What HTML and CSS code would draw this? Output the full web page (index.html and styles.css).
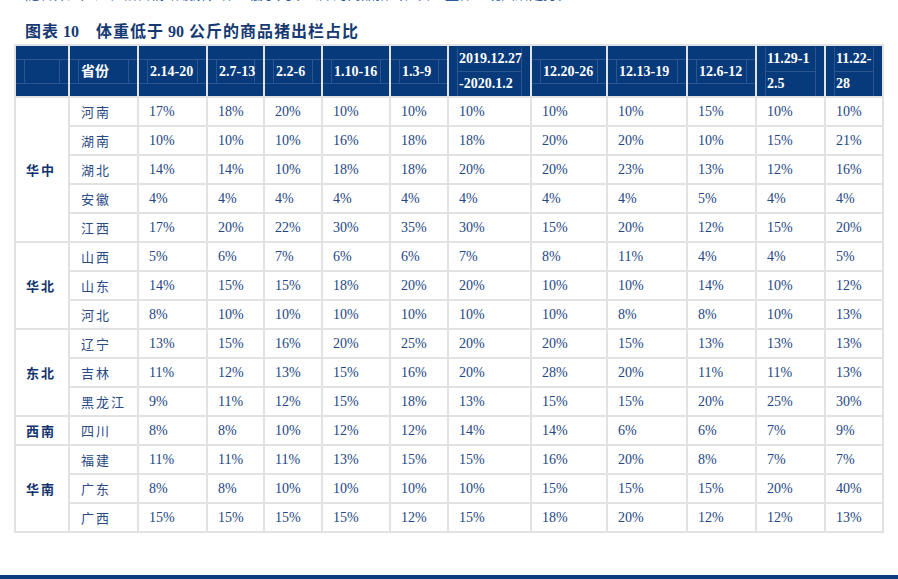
FILE: index.html
```html
<!DOCTYPE html>
<html lang="zh">
<head>
<meta charset="utf-8">
<title>体重低于90公斤的商品猪出栏占比</title>
<link rel="stylesheet" href="styles.css">
</head>
<body>
<div class="page">
  <p class="lead">随着养殖户压栏惜售情绪缓解，体重低于九十公斤的商品猪出栏占比整体呈现回落走势。</p>
  <h2 class="title">图表<span class="num">10</span><span class="gap"></span>体重低于<span class="num2">90</span>公斤的商品猪出栏占比</h2>
  <table class="grid">
    <colgroup>
      <col style="width:54px"><col style="width:69px"><col style="width:69px"><col style="width:57px"><col style="width:58px"><col style="width:68px"><col style="width:58px"><col style="width:83px"><col style="width:76px"><col style="width:80px"><col style="width:69px"><col style="width:69px"><col style="width:58px">
    </colgroup>
    <thead>
      <tr>
        <th><div class="h1"><span>&nbsp;</span></div></th>
        <th><div class="h1"><span>省份</span></div></th>
        <th><div class="h1"><span>2.14-20</span></div></th>
        <th><div class="h1"><span>2.7-13</span></div></th>
        <th><div class="h1"><span>2.2-6</span></div></th>
        <th><div class="h1"><span>1.10-16</span></div></th>
        <th><div class="h1"><span>1.3-9</span></div></th>
        <th><div class="h2"><span>2019.12.27</span><span>-2020.1.2</span></div></th>
        <th><div class="h1"><span>12.20-26</span></div></th>
        <th><div class="h1"><span>12.13-19</span></div></th>
        <th><div class="h1"><span>12.6-12</span></div></th>
        <th><div class="h2"><span>11.29-1</span><span>2.5</span></div></th>
        <th><div class="h2"><span>11.22-</span><span>28</span></div></th>
      </tr>
    </thead>
    <tbody>
      <tr><td class="region" rowspan="5">华中</td><td class="prov">河南</td><td>17%</td><td>18%</td><td>20%</td><td>10%</td><td>10%</td><td>10%</td><td>10%</td><td>10%</td><td>15%</td><td>10%</td><td>10%</td></tr>
      <tr><td class="prov">湖南</td><td>10%</td><td>10%</td><td>10%</td><td>16%</td><td>18%</td><td>18%</td><td>20%</td><td>20%</td><td>10%</td><td>15%</td><td>21%</td></tr>
      <tr><td class="prov">湖北</td><td>14%</td><td>14%</td><td>10%</td><td>18%</td><td>18%</td><td>20%</td><td>20%</td><td>23%</td><td>13%</td><td>12%</td><td>16%</td></tr>
      <tr><td class="prov">安徽</td><td>4%</td><td>4%</td><td>4%</td><td>4%</td><td>4%</td><td>4%</td><td>4%</td><td>4%</td><td>5%</td><td>4%</td><td>4%</td></tr>
      <tr><td class="prov">江西</td><td>17%</td><td>20%</td><td>22%</td><td>30%</td><td>35%</td><td>30%</td><td>15%</td><td>20%</td><td>12%</td><td>15%</td><td>20%</td></tr>
      <tr><td class="region" rowspan="3">华北</td><td class="prov">山西</td><td>5%</td><td>6%</td><td>7%</td><td>6%</td><td>6%</td><td>7%</td><td>8%</td><td>11%</td><td>4%</td><td>4%</td><td>5%</td></tr>
      <tr><td class="prov">山东</td><td>14%</td><td>15%</td><td>15%</td><td>18%</td><td>20%</td><td>20%</td><td>10%</td><td>10%</td><td>14%</td><td>10%</td><td>12%</td></tr>
      <tr><td class="prov">河北</td><td>8%</td><td>10%</td><td>10%</td><td>10%</td><td>10%</td><td>10%</td><td>10%</td><td>8%</td><td>8%</td><td>10%</td><td>13%</td></tr>
      <tr><td class="region" rowspan="3">东北</td><td class="prov">辽宁</td><td>13%</td><td>15%</td><td>16%</td><td>20%</td><td>25%</td><td>20%</td><td>20%</td><td>15%</td><td>13%</td><td>13%</td><td>13%</td></tr>
      <tr><td class="prov">吉林</td><td>11%</td><td>12%</td><td>13%</td><td>15%</td><td>16%</td><td>20%</td><td>28%</td><td>20%</td><td>11%</td><td>11%</td><td>13%</td></tr>
      <tr><td class="prov">黑龙江</td><td>9%</td><td>11%</td><td>12%</td><td>15%</td><td>18%</td><td>13%</td><td>15%</td><td>15%</td><td>20%</td><td>25%</td><td>30%</td></tr>
      <tr><td class="region">西南</td><td class="prov">四川</td><td>8%</td><td>8%</td><td>10%</td><td>12%</td><td>12%</td><td>14%</td><td>14%</td><td>6%</td><td>6%</td><td>7%</td><td>9%</td></tr>
      <tr><td class="region" rowspan="3">华南</td><td class="prov">福建</td><td>11%</td><td>11%</td><td>11%</td><td>13%</td><td>15%</td><td>15%</td><td>16%</td><td>20%</td><td>8%</td><td>7%</td><td>7%</td></tr>
      <tr><td class="prov">广东</td><td>8%</td><td>8%</td><td>10%</td><td>10%</td><td>10%</td><td>10%</td><td>15%</td><td>15%</td><td>15%</td><td>20%</td><td>40%</td></tr>
      <tr><td class="prov">广西</td><td>15%</td><td>15%</td><td>15%</td><td>15%</td><td>12%</td><td>15%</td><td>18%</td><td>20%</td><td>12%</td><td>12%</td><td>13%</td></tr>
    </tbody>
  </table>
  <div class="rule"></div>
</div>
</body>
</html>
```

FILE: styles.css
```css
html, body {
  margin: 0;
  padding: 0;
  background: #ffffff;
  overflow: hidden;
}

.page {
  width: 898px;
  height: 579px;
  padding-top: 1px;
  box-sizing: border-box;
  font-family: "Liberation Serif", "Noto Sans CJK SC", serif;
  color: #1d3f7b;
}

.lead {
  margin: -14px 0 0 25px;
  font-size: 14px;
  line-height: 16px;
  color: #2d5aa0;
  white-space: nowrap;
}

.title {
  margin: 19px 0 0 25px;
  font-size: 16px;
  line-height: 20px;
  font-weight: bold;
  letter-spacing: 1px;
  color: #173a72;
}

.title .num {
  margin: 0 0 0 4px;
  letter-spacing: 0;
}

.title .gap {
  display: inline-block;
  width: 17px;
}

.title .num2 {
  margin: 0 5px 0 4px;
  letter-spacing: 0;
}

.grid {
  margin: 2px 0 0 14px;
  border-collapse: collapse;
  table-layout: fixed;
  width: 868px;
  border: 2px solid #e2e2e2;
}

.grid th,
.grid td {
  border: 2px solid #e2e2e2;
  padding: 0;
}

.grid th {
  background: #063a7b;
  color: #ffffff;
  font-weight: bold;
  font-size: 14px;
  text-align: left;
  height: 50px;
  vertical-align: middle;
}

.h1 {
  border-top: 1px solid #2b5690;
  border-bottom: 1px solid #2b5690;
}

.h1 span {
  display: block;
  margin: 0 8px 0 8px;
  padding-left: 2px;
  border-left: 1px solid #2b5690;
  border-right: 1px solid #2b5690;
  line-height: 23px;
  white-space: nowrap;
}

.h2 span {
  display: block;
  margin: 0 8px 0 8px;
  padding-left: 1px;
  border-left: 1px solid #2b5690;
  border-right: 1px solid #2b5690;
  line-height: 24px;
  white-space: nowrap;
}

.h2 span:first-child {
  border-bottom: 1px solid #2b5690;
}

.grid td {
  height: 27px;
  font-size: 14px;
  color: #234684;
  padding-left: 10px;
  vertical-align: middle;
  white-space: nowrap;
}

.grid td.prov {
  padding-left: 11px;
  color: #2a4a86;
  font-size: 13px;
  letter-spacing: 2px;
}

.grid td.region {
  padding-left: 10px;
  font-weight: bold;
  font-size: 13px;
  color: #12336d;
  letter-spacing: 2px;
}

.rule {
  margin-top: 42px;
  height: 6px;
  background: #0c3c7d;
}
```
